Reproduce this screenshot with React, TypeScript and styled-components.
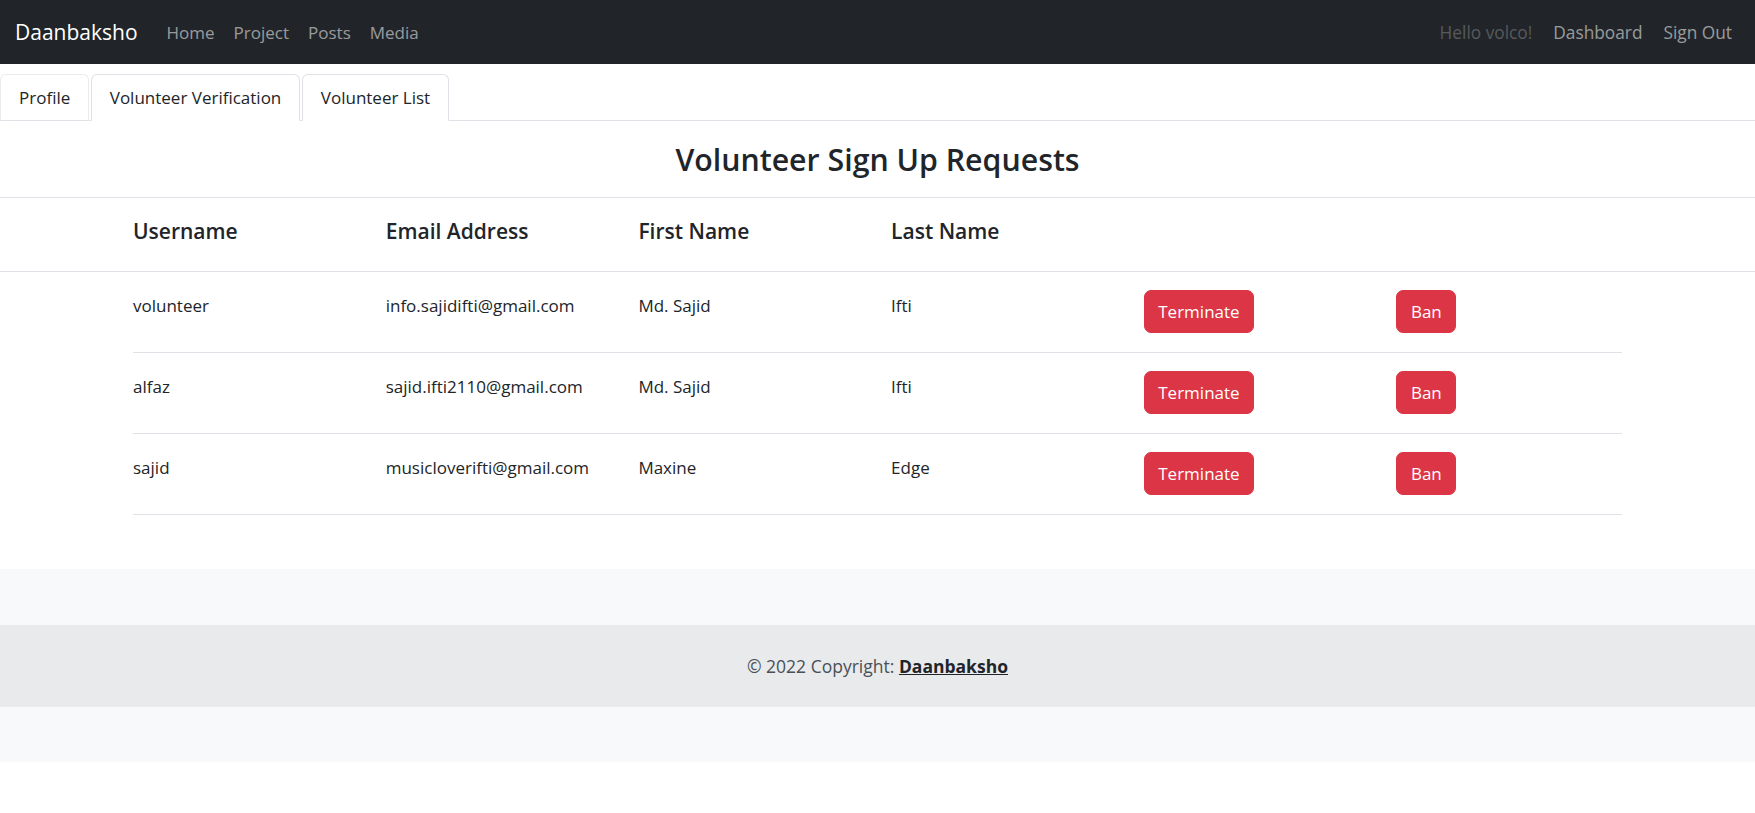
import React from "react";
import styled, { createGlobalStyle } from "styled-components";

const GlobalStyle = createGlobalStyle`
  * { box-sizing: border-box; }
  html, body { margin: 0; padding: 0; background: #fff; }
  body {
    font-family: "Open Sans", "Noto Sans", sans-serif;
    font-size: 17px;
    color: #212529;
  }
`;

const Navbar = styled.nav`
  height: 64px;
  background: #212529;
  display: flex;
  align-items: center;
  padding: 0 12.5px 0 15px;
`;

const Brand = styled.a`
  font-size: 21px;
  color: #fff;
  text-decoration: none;
  margin-right: 19.5px;
`;

const NavGroup = styled.div<{ $right?: boolean }>`
  display: flex;
  align-items: center;
  margin-left: ${(p) => (p.$right ? "auto" : "0")};
`;

const NavLink = styled.a<{ $dim?: boolean; $wide?: boolean }>`
  padding: 0 ${(p) => (p.$wide ? "10.5px" : "9.5px")};
  font-size: ${(p) => (p.$wide ? "17.3px" : "17px")};
  text-decoration: none;
  color: ${(p) => (p.$dim ? "rgba(255,255,255,0.25)" : "rgba(255,255,255,0.55)")};
`;

const Tabs = styled.ul`
  display: flex;
  gap: 1.5px;
  list-style: none;
  margin: 0;
  padding: 10px 0 0;
  border-bottom: 1px solid #dee2e6;
`;

const Tab = styled.li<{ $open?: boolean }>`
  height: 47px;
  margin-bottom: -1px;
  padding: 0 18px;
  display: flex;
  align-items: center;
  font-size: 17px;
  color: #212529;
  background: #fff;
  border: 1px solid;
  border-color: ${(p) =>
    p.$open ? "#dee2e6 #dee2e6 #fff" : "#e9ecef #e9ecef #dee2e6"};
  border-top-left-radius: 6px;
  border-top-right-radius: 6px;
`;

const Title = styled.h2`
  margin: 0;
  height: 77px;
  display: flex;
  align-items: center;
  justify-content: center;
  font-size: 30.3px;
  font-weight: 600;
  color: #212529;
  border-bottom: 1px solid #dee2e6;
`;

const HeaderBar = styled.div`
  height: 74px;
  padding-top: 17.5px;
  border-bottom: 1px solid #dee2e6;
`;

const Columns = styled.div`
  display: grid;
  grid-template-columns: repeat(5, 252.7px) 1fr;
  width: 1489px;
  margin: 0 auto;
`;

const HeadCell = styled.div`
  font-size: 21px;
  font-weight: 600;
  line-height: 1.5;
`;

const TableBody = styled.div`
  width: 1489px;
  margin: 0 auto 54px;
`;

const Row = styled(Columns)`
  width: auto;
  height: 81px;
  padding-top: 18px;
  align-items: start;
  border-bottom: 1px solid #dee2e6;
`;

const Cell = styled.div`
  line-height: 1.5;
  padding-top: 3px;
  font-size: 17px;
`;

const DangerButton = styled.button`
  justify-self: start;
  height: 43px;
  padding: 0 13.5px;
  font-family: inherit;
  font-size: 17px;
  color: #fff;
  background: #dc3545;
  border: 1px solid #dc3545;
  border-radius: 7px;
`;

const Footer = styled.footer`
  background: #f8f9fa;
  padding: 56px 0 55px;
`;

const FooterBand = styled.div`
  height: 82px;
  display: flex;
  align-items: center;
  justify-content: center;
  background: rgba(0, 0, 0, 0.06);
  font-size: 17.5px;
  color: #495057;
  white-space: pre;
`;

const FooterLink = styled.a`
  color: #212529;
  font-weight: 700;
  text-decoration: underline;
`;

const rows = [
  { user: "volunteer", email: "info.sajidifti@gmail.com", first: "Md. Sajid", last: "Ifti" },
  { user: "alfaz", email: "sajid.ifti2110@gmail.com", first: "Md. Sajid", last: "Ifti" },
  { user: "sajid", email: "musicloverifti@gmail.com", first: "Maxine", last: "Edge" },
];

export default function App() {
  return (
    <>
      <GlobalStyle />
      <Navbar>
        <Brand>Daanbaksho</Brand>
        <NavGroup>
          <NavLink>Home</NavLink>
          <NavLink>Project</NavLink>
          <NavLink>Posts</NavLink>
          <NavLink>Media</NavLink>
        </NavGroup>
        <NavGroup $right>
          <NavLink $dim $wide>Hello volco!</NavLink>
          <NavLink $wide>Dashboard</NavLink>
          <NavLink $wide>Sign Out</NavLink>
        </NavGroup>
      </Navbar>
      <Tabs>
        <Tab>Profile</Tab>
        <Tab $open>Volunteer Verification</Tab>
        <Tab $open>Volunteer List</Tab>
      </Tabs>
      <Title>Volunteer Sign Up Requests</Title>
      <HeaderBar>
        <Columns>
          <HeadCell>Username</HeadCell>
          <HeadCell>Email Address</HeadCell>
          <HeadCell>First Name</HeadCell>
          <HeadCell>Last Name</HeadCell>
        </Columns>
      </HeaderBar>
      <TableBody>
        {rows.map((r) => (
          <Row key={r.user}>
            <Cell>{r.user}</Cell>
            <Cell>{r.email}</Cell>
            <Cell>{r.first}</Cell>
            <Cell>{r.last}</Cell>
            <DangerButton>Terminate</DangerButton>
            <DangerButton>Ban</DangerButton>
          </Row>
        ))}
      </TableBody>
      <Footer>
        <FooterBand>
          {"© 2022 Copyright: "}
          <FooterLink>Daanbaksho</FooterLink>
        </FooterBand>
      </Footer>
    </>
  );
}
